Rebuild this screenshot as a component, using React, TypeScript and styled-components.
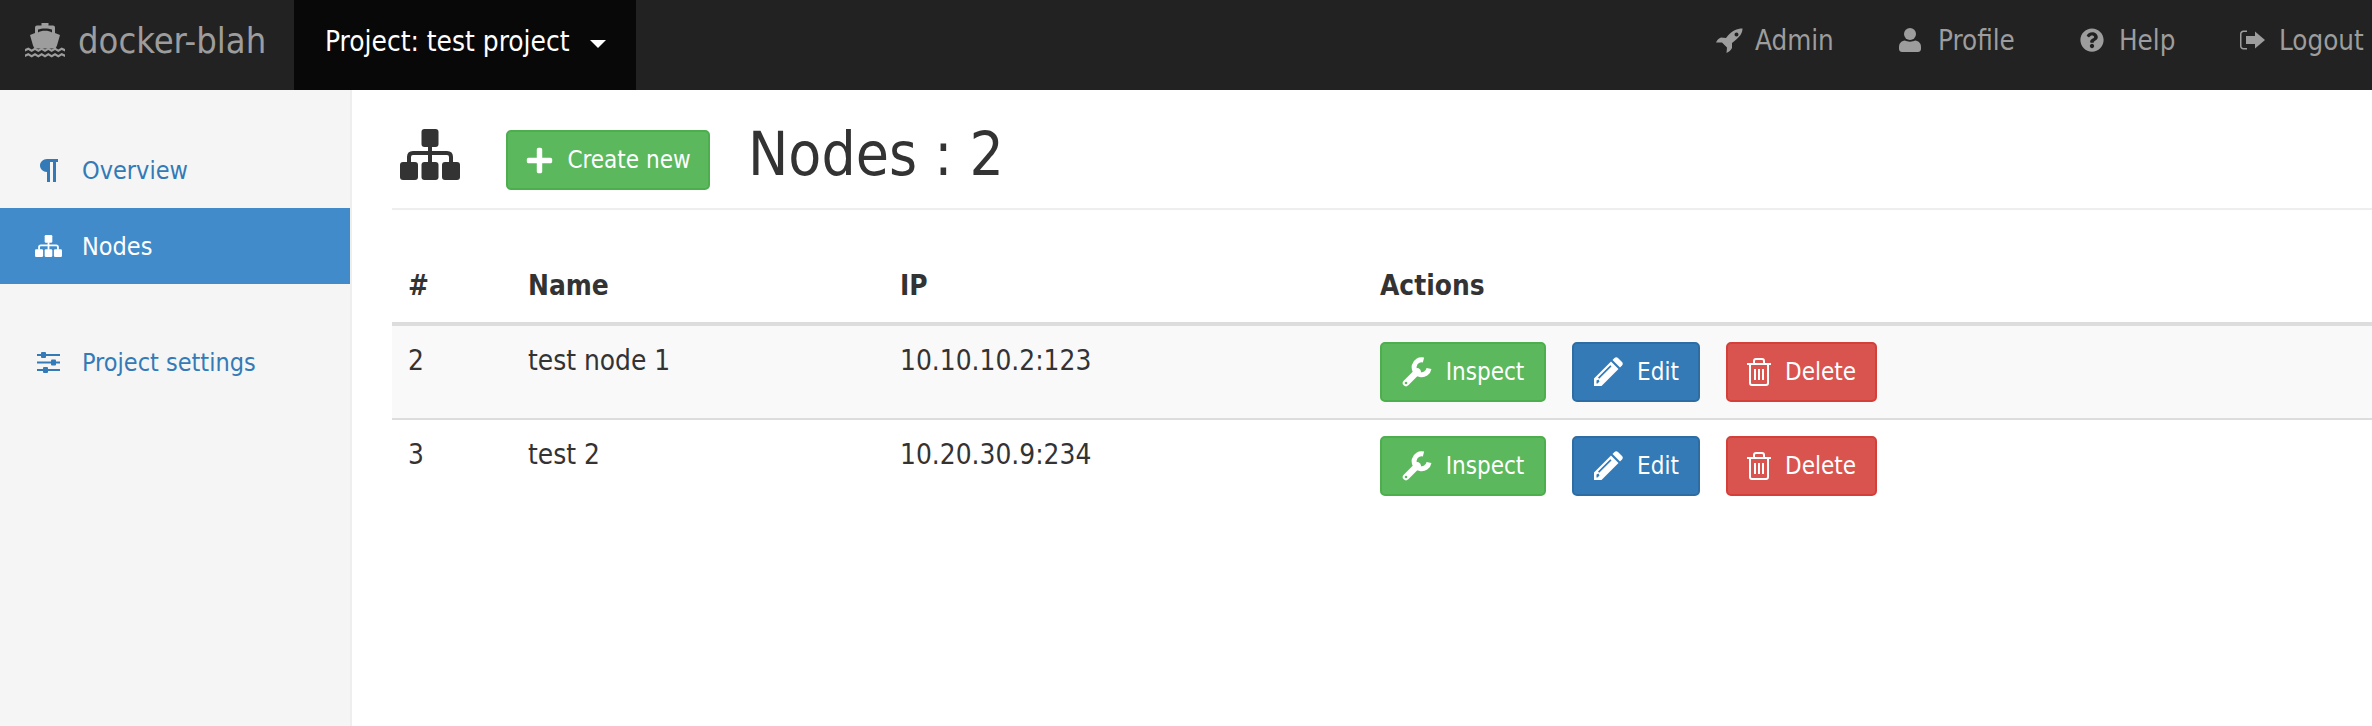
import styled, { createGlobalStyle } from "styled-components"
import { FaQuestionCircle, FaPlus } from "react-icons/fa"

const ShipIcon = () => (
    <svg width="40" height="35" viewBox="0 0 40 35" fill="currentColor">
        <path fillRule="evenodd" d="M16.500 0h7v2.500H28a2 2 0 0 1 2 2V10l5 2-3 10.500-1.500 3H9.500l-1.500-3L5 12l5-2V4.500a2 2 0 0 1 2-2h4.500zM13 9.500c3-2.500 11-2.500 14 0V6.500c-3-1.500-11-1.500-14 0z" />
        <path d="M0 26l3.300-1.500L6.700 26.500 10 24.500l3.300 2L16.700 24.500l3.300 2 3.300-2 3.400 2 3.300-2 3.300 2 3.400-2L40 26v2.500l-3.300-1.500-3.400 2-3.300-2-3.300 2-3.400-2-3.300 2-3.300-2-3.400 2-3.300-2-3.300 2L3.300 27 0 28.500z" />
        <path d="M0 31.500l3.300-1.500 3.400 2 3.300-2 3.300 2 3.400-2 3.300 2 3.300-2 3.400 2 3.300-2 3.300 2 3.400-2 3.300 1.500V34l-3.300-1.500-3.400 2-3.300-2-3.300 2-3.400-2-3.300 2-3.300-2-3.400 2-3.300-2-3.300 2-3.400-2L0 34z" />
    </svg>
)

const RocketIcon = () => (
    <svg width="27" height="25" viewBox="0 0 27 25" fill="currentColor">
        <path fillRule="evenodd" d="M26.500 0.500C21 0.500 16 3 12 7.500L10 10 5 9.500C3 10 1 12 0 14.500L6 14.500 11 19.500 10.500 25C13 24 15 22 16 20L16 15 18.500 13C23.500 9 26.500 5.500 26.500 0.500zM20.500 4.500a2 2 0 1 1 0 4 2 2 0 0 1 0-4z" />
    </svg>
)

const UserIcon = () => (
    <svg width="22" height="24" viewBox="0 0 22 24" fill="currentColor">
        <circle cx="11" cy="6" r="6" />
        <path d="M6 12.500C8 14 14 14 16 12.500 20 13 22 15.500 22 19v2c0 2-1.500 3-3 3H3c-1.500 0-3-1-3-3v-2c0-3.500 2-6 6-6.500z" />
    </svg>
)

const LogoutIcon = () => (
    <svg width="25" height="20" viewBox="0 0 25 20" fill="currentColor">
        <path d="M7 0.500H3.500C1.500 0.500 0 2 0 4v12c0 2 1.500 3.500 3.500 3.500H7v-1.500H3.500C2.500 18 1.500 17 1.500 16V4c0-1 1-2 2-2H7z" />
        <path d="M15 1.500L25 10 15 18.500V14H6V6h9z" />
    </svg>
)

const ParagraphIcon = () => (
    <svg width="18" height="23" viewBox="0 0 18 23" fill="currentColor">
        <path d="M18 0H7C3 0 0 3 0 6.500S3 13 7 13v10h3V3h3v20h3V3h2z" />
    </svg>
)

const SitemapIcon = ({ width, height }: { width: number; height: number }) => (
    <svg width={width} height={height} viewBox="0 0 60 51" fill="currentColor" preserveAspectRatio="none">
        <rect x="21.500" y="0" width="17" height="18" rx="3" />
        <rect x="0" y="33" width="18" height="18" rx="3" />
        <rect x="21.500" y="33" width="17" height="18" rx="3" />
        <rect x="42" y="33" width="18" height="18" rx="3" />
        <path d="M30 17v17M9 34v-6q0-4 4-4h34q4 0 4 4v6" fill="none" stroke="currentColor" strokeWidth="4" />
    </svg>
)

const SlidersIcon = () => (
    <svg width="23" height="21" viewBox="0 0 23 21" fill="currentColor">
        <rect x="0" y="2" width="23" height="2" />
        <rect x="4" y="0" width="5" height="6" rx="1" />
        <rect x="0" y="9.500" width="23" height="2" />
        <rect x="14" y="7.500" width="5" height="6" rx="1" />
        <rect x="0" y="17" width="23" height="2" />
        <rect x="6" y="15" width="5" height="6" rx="1" />
    </svg>
)

const WrenchIcon = () => (
    <svg width="30" height="30" viewBox="0 0 30 30" fill="none" stroke="currentColor">
        <path d="M4 26L15.500 14.500" strokeWidth="6.500" strokeLinecap="round" />
        <path d="M27 11.500A7.500 7.500 0 1 1 21.500 3" strokeWidth="5" />
        <circle cx="4" cy="26" r="1.300" fill="#5cb85c" stroke="none" />
    </svg>
)

const PencilIcon = () => (
    <svg width="30" height="30" viewBox="0 0 30 30" fill="currentColor">
        <path fillRule="evenodd" d="M1 29v-7.500L18 4.500 25.500 12 8.500 29zM5 20.500L6.200 21.700 18.500 9.400 17.300 8.200zM3.500 23.500V26.500H4.500L6.500 24.500 5.500 22.500z" />
        <path d="M19.500 3L21.500 1C22.500 0 24 0 25 1L29 5C30 6 30 7.500 29 8.500L27 10.500z" />
    </svg>
)

const TrashIcon = () => (
    <svg width="24" height="28" viewBox="0 0 24 28" fill="none" stroke="currentColor" strokeWidth="2">
        <path d="M0 6h24M7 6V3q0-2 2-2h6q2 0 2 2v3M3 6v19q0 2 2 2h14q2 0 2-2V6M8 11v11M12 11v11M16 11v11" />
    </svg>
)

const nodes = [
    { id: 2, name: "test node 1", ip: "10.10.10.2:123" },
    { id: 3, name: "test 2", ip: "10.20.30.9:234" },
]

const App = () => {
    return (
        <>
            <GlobalStyle />
            <Navbar>
                <Brand><ShipIcon /><span>docker-blah</span></Brand>
                <ProjectMenu>Project: test project<Caret /></ProjectMenu>
                <NavLinks>
                    <NavLink $width={183}><NavIcon><RocketIcon /></NavIcon>Admin</NavLink>
                    <NavLink $width={181}><NavIcon><UserIcon /></NavIcon>Profile</NavLink>
                    <NavLink $width={160}><NavIcon><FaQuestionCircle size={24} /></NavIcon>Help</NavLink>
                    <NavLink $width={132}><NavIcon><LogoutIcon /></NavIcon>Logout</NavLink>
                </NavLinks>
            </Navbar>
            <Body>
                <Sidebar>
                    <SideLink><IconSlot><ParagraphIcon /></IconSlot>Overview</SideLink>
                    <SideLink $active><IconSlot><SitemapIcon width={27} height={22} /></IconSlot>Nodes</SideLink>
                    <SideGap />
                    <SideLink><IconSlot><SlidersIcon /></IconSlot>Project settings</SideLink>
                </Sidebar>
                <Main>
                    <PageHeader>
                        <HeaderIcon><SitemapIcon width={60} height={51} /></HeaderIcon>
                        <CreateButton><FaPlus size={29} />Create new</CreateButton>
                        <Title>Nodes : 2</Title>
                    </PageHeader>
                    <Table>
                        <thead>
                            <tr>
                                <Th $width={120}>#</Th>
                                <Th $width={372}>Name</Th>
                                <Th $width={480}>IP</Th>
                                <Th>Actions</Th>
                            </tr>
                        </thead>
                        <tbody>
                            {nodes.map((node) => (
                                <Row key={node.id}>
                                    <Td>{node.id}</Td>
                                    <Td>{node.name}</Td>
                                    <Td>{node.ip}</Td>
                                    <ActionsCell>
                                        <Actions>
                                            <ActionButton $color="#5cb85c" $border="#4cae4c" $width={166}><WrenchIcon />Inspect</ActionButton>
                                            <ActionButton $color="#337ab7" $border="#2e6da4" $width={128}><PencilIcon />Edit</ActionButton>
                                            <ActionButton $color="#d9534f" $border="#d43f3a" $width={151}><TrashIcon />Delete</ActionButton>
                                        </Actions>
                                    </ActionsCell>
                                </Row>
                            ))}
                        </tbody>
                    </Table>
                </Main>
            </Body>
        </>
    )
}

const GlobalStyle = createGlobalStyle`
    html, body {
        margin: 0;
        height: 100%;
        overflow: hidden;
        background: #fff;
    }
    body {
        font-family: "DejaVu Sans Condensed", "DejaVu Sans", sans-serif;
        font-stretch: condensed;
        color: #333;
    }
`

const Navbar = styled.nav`
    height: 90px;
    background: #222;
    display: flex;
    align-items: stretch;
    white-space: nowrap;
`

const Brand = styled.div`
    width: 294px;
    box-sizing: border-box;
    padding: 0 0 10px 25px;
    display: flex;
    align-items: center;
    gap: 13px;
    color: #9d9d9d;
    font-size: 36px;
`

const ProjectMenu = styled.div`
    width: 342px;
    box-sizing: border-box;
    background: #080808;
    color: #fff;
    font-size: 27.8px;
    padding: 0 0 8px 31px;
    display: flex;
    align-items: center;
`

const Caret = styled.span`
    margin: 6px 0 0 20px;
    border-top: 8px solid #fff;
    border-left: 8px solid transparent;
    border-right: 8px solid transparent;
`

const NavLinks = styled.div`
    margin-left: auto;
    display: flex;
    align-items: center;
    padding-bottom: 10px;
`

const NavLink = styled.div<{ $width: number }>`
    width: ${(p) => p.$width}px;
    display: flex;
    align-items: center;
    color: #9d9d9d;
    font-size: 27.5px;
`

const NavIcon = styled.span`
    width: 39px;
    display: inline-flex;
`

const Body = styled.div`
    display: flex;
    height: 636px;
`

const Sidebar = styled.aside`
    width: 352px;
    box-sizing: border-box;
    background: #f5f5f5;
    border-right: 2px solid #eee;
    padding-top: 42px;
`

const SideLink = styled.div<{ $active?: boolean }>`
    height: 76px;
    display: flex;
    align-items: center;
    font-size: 25px;
    color: ${(p) => (p.$active ? "#fff" : "#337ab7")};
    background: ${(p) => (p.$active ? "#428bca" : "transparent")};
`

const IconSlot = styled.span`
    width: 82px;
    padding: 0 20px 0 35px;
    box-sizing: border-box;
    display: inline-flex;
    justify-content: center;
`

const SideGap = styled.div`
    height: 40px;
`

const Main = styled.main`
    flex: 1;
    padding-left: 40px;
    min-width: 0;
`

const PageHeader = styled.header`
    height: 120px;
    box-sizing: border-box;
    padding-top: 39px;
    border-bottom: 2px solid #eee;
    display: flex;
    align-items: flex-start;
    color: #333;
`

const HeaderIcon = styled.span`
    display: inline-flex;
    margin-left: 8px;
`

const CreateButton = styled.button`
    margin: 1px 0 0 46px;
    width: 204px;
    height: 60px;
    display: flex;
    align-items: center;
    justify-content: center;
    gap: 13px;
    background: #5cb85c;
    border: 2px solid #4cae4c;
    border-radius: 5px;
    color: #fff;
    font: inherit;
    font-size: 24px;
    padding: 0;
`

const Title = styled.h1`
    margin: -5px 0 0 38px;
    font-size: 60px;
    font-weight: 400;
    line-height: 1;
`

const Table = styled.table`
    width: 100%;
    margin-top: 38px;
    border-collapse: collapse;
    table-layout: fixed;
    font-size: 27.8px;
`

const Th = styled.th<{ $width?: number }>`
    width: ${(p) => (p.$width ? `${p.$width - 16}px` : "auto")};
    height: 74px;
    padding: 0 0 0 16px;
    box-sizing: content-box;
    text-align: left;
    font-weight: 700;
    border-bottom: 4px solid #ddd;
`

const Row = styled.tr`
    &:nth-child(odd) {
        background: #f9f9f9;
    }
    & + & td {
        border-top: 2px solid #ddd;
    }
`

const Td = styled.td`
    padding: 19px 0 15px 16px;
    vertical-align: top;
    line-height: 32px;
`

const ActionsCell = styled(Td)`
    padding: 16px 0;
`

const Actions = styled.div`
    display: flex;
    gap: 26px;
    margin-left: 16px;
`

const ActionButton = styled.button<{ $color: string; $border: string; $width: number }>`
    width: ${(p) => p.$width}px;
    height: 60px;
    display: flex;
    align-items: center;
    justify-content: center;
    gap: 14px;
    background: ${(p) => p.$color};
    border: 2px solid ${(p) => p.$border};
    border-radius: 5px;
    color: #fff;
    font: inherit;
    font-size: 24px;
    padding: 0;
`

export default App
